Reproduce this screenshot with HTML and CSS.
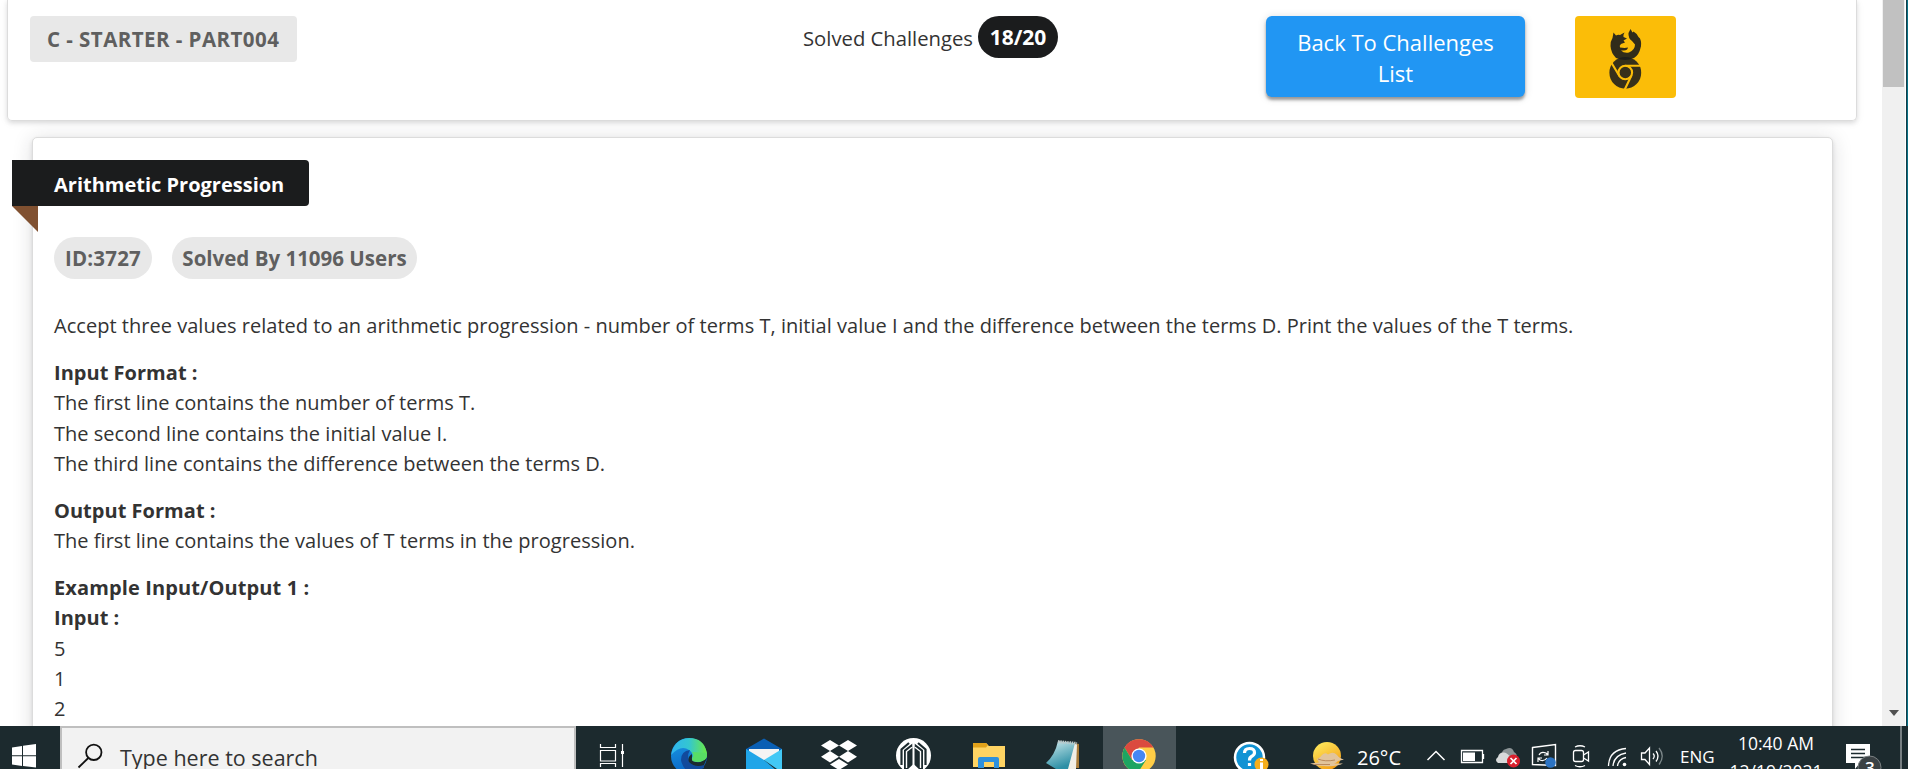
FILE: index.html
```html
<!DOCTYPE html>
<html lang="en">
<head>
<meta charset="utf-8">
<title>Arithmetic Progression</title>
<link rel="stylesheet" href="styles.css">
</head>
<body>
<div class="browser">
  <main class="page">
    <header class="topbar">
      <div class="part-label"><span class="t-part">C - STARTER - PART004</span></div>
      <div class="solved"><span class="t-solved">Solved Challenges</span><span class="count"><span class="t-count">18/20</span></span></div>
      <button class="back"><span class="t-back1">Back To Challenges</span><span class="t-back2">List</span></button>
      <div class="browsers">
        <svg width="101" height="82" viewBox="1575 16 101 82">
          <path fill="#1b1c1d" fill-opacity=".9" d="M1613.500 32.500L1616 35.500Q1618 34.500 1620 35L1624.500 32.500Q1623 35 1623.500 37L1627 38.500L1623.500 40.500L1625 42.500L1621 44Q1619 45.500 1620 47.500L1624.500 48L1628 47.500Q1627.500 50.500 1624 50.500L1621 50.500Q1624 53.500 1629 52.500Q1635 50 1635 44.500L1632 41Q1628 38 1628.500 33L1630.500 29L1632.500 32.500L1633.500 31.500Q1637 33.500 1638.500 37L1640 38.500Q1642 43 1640.500 48Q1639 55 1634 58Q1625 62 1616 58Q1611 53 1610.500 46Q1610 42 1612.500 38Z"/>
          <circle cx="1625.300" cy="72.800" r="15.900" fill="#1b1c1d" fill-opacity=".88"/>
          <g fill="none" stroke="#fbbd08" stroke-width="2.100"><circle cx="1625.300" cy="72.500" r="6.800"/><path d="M1625.300 65.700H1641M1619.400 76L1611.300 62.500M1631.200 76L1624.500 90"/></g>
        </svg>
      </div>
    </header>
    <section class="challenge">
      <div class="ribbon"><span class="t-ribbon">Arithmetic Progression</span></div>
      <div class="tags"><span class="tag tag-id"><span class="t-id">ID:3727</span></span><span class="tag tag-users"><span class="t-users">Solved By 11096 Users</span></span></div>
      <div class="description">
        <p>Accept three values related to an arithmetic progression - number of terms T, initial value I and the difference between the terms D. Print the values of the T terms.</p>
        <p><b>Input Format :</b><br>The first line contains the number of terms T.<br>The second line contains the initial value I.<br>The third line contains the difference between the terms D.</p>
        <p><b>Output Format :</b><br>The first line contains the values of T terms in the progression.</p>
        <p><b class="example">Example Input/Output 1 :</b><br><b>Input :</b><br>5<br>1<br>2</p>
      </div>
    </section>
  </main>
  <div class="scrollbar"><div class="thumb"></div><div class="down"></div></div>
  <div class="desktop-edge"></div>
</div>
<footer class="taskbar">
  <svg class="start" width="60" height="43" viewBox="0 726 60 43" fill="#fff"><path d="M12 747.500L22 746V755.200H12ZM23 745.800L36 744V755.200H23ZM12 756.200H22V766L12 764.500ZM23 756.200H36V767.500L23 766Z"/></svg>
  <div class="search">
    <svg width="50" height="41" viewBox="62 728 50 41" fill="none" stroke="#111" stroke-width="1.800"><circle cx="93.800" cy="752.300" r="7.700"/><path d="M88.300 758L78.500 767.500"/></svg>
    <span class="t-search">Type here to search</span>
  </div>
  <svg width="76" height="43" viewBox="576 726 76 43" fill="none" stroke="#fff" stroke-width="1.200"><path d="M600.500 744V747.500H615.500V744M600.500 750.500H615.500V761H600.500ZM600.500 767V763.500H615.500V767M622.500 744V767"/><path d="M621 751h3v3h-3z" fill="#fff" stroke="none"/></svg>
  <svg width="75" height="43" viewBox="652 726 75 43">
    <defs><linearGradient id="e1"><stop offset="0" stop-color="#2fb4f0"/><stop offset=".5" stop-color="#34c6d0"/><stop offset="1" stop-color="#6bea42"/></linearGradient><linearGradient id="e2" x1="0" y1="0" x2=".3" y2="1"><stop offset="0" stop-color="#1a9ae5"/><stop offset="1" stop-color="#0a66c5"/></linearGradient></defs>
    <circle cx="689" cy="756" r="18" fill="url(#e2)"/>
    <path d="M671 755Q674 739 689 738Q704 738 707 753Q708 762 698 762Q691 762 692 758Q694 753 689 750Q681 744 671 755Z" fill="url(#e1)"/>
    <path d="M690 750Q681 751 681 760Q682 767 690 774L704 768V764Q690 768 688 758Q688 753 690 750Z" fill="#114a9c"/>
    <path d="M692 754Q687 757 689 762Q695 768 704 765L707 758Q702 763 696 762Q691 761 692 758Z" fill="#1c2a2e"/>
    <path d="M692 752Q695 755 692 759Q691 762 699 762Q707 760 707 753Z" fill="#58dd65"/>
  </svg>
  <svg width="75" height="43" viewBox="727 726 75 43"><path d="M746 749L764 738.500L782 749V756H746Z" fill="#0a5fb4"/><path d="M749 749H779V760H749Z" fill="#f4f4f4"/><path d="M746 749L764 760L782 775H746Z" fill="#20a5e8"/><path d="M782 749L764 760L777 769H782Z" fill="#42c8f5"/></svg>
  <svg width="74" height="43" viewBox="802 726 74 43" fill="#fff"><path d="M830 740L839 745.500L830 751L821 745.500ZM848 740L857 745.500L848 751L839 745.500ZM830 751L839 756.800L830 762.500L821 756.800ZM848 751L857 756.800L848 762.500L839 756.800ZM839 759L848 764.500L839 770L830 764.500Z"/></svg>
  <svg width="75" height="43" viewBox="876 726 75 43"><circle cx="913.500" cy="755.500" r="17.500" fill="#fff"/><path d="M904 769V750L912.500 743.500V769ZM914.500 743.500L923 750V769H914.500Z" fill="#1c2a2e"/><path d="M901.500 765V749.500L909 743M925.500 765V749.500L918 743" fill="none" stroke="#1c2a2e" stroke-width="2.200"/><path d="M906.500 768V751.500L912 747.300M920.500 768V751.500L915 747.300" fill="none" stroke="#fff" stroke-width="1.400"/><path d="M907 770L913.500 764L920 770Z" fill="#fff"/><path d="M912.500 741H914.500V748H912.500Z" fill="#fff"/></svg>
  <svg width="75" height="43" viewBox="951 726 75 43"><path d="M973 743H986L989 746H1005V767H973Z" fill="#ffd463"/><path d="M973 743H986L988 745L986 747.500H973Z" fill="#e2a21a"/><path d="M978 768V759Q978 757 980 757H997Q999 757 999 759V768H994V762H984V768Z" fill="#2f91dc"/></svg>
  <svg width="77" height="43" viewBox="1026 726 77 43"><defs><linearGradient id="np" x2=".4" y2="1"><stop offset="0" stop-color="#d7edf0"/><stop offset=".5" stop-color="#7dbdc9"/><stop offset="1" stop-color="#2d8fa5"/></linearGradient></defs><path d="M1074 743L1079 744V768H1066Z" fill="#a87b38"/><path d="M1072 743L1077 744.500L1076 769H1066Z" fill="#f1eee6"/><path d="M1058 741L1075 743L1068 769H1056L1046 763Q1055 755 1058 741Z" fill="url(#np)"/><path d="M1058 741.500L1077 743.500" stroke="#bcc8c9" stroke-width="3" stroke-dasharray="1.500 .8"/></svg>
  <svg class="active" width="73" height="43" viewBox="1103 726 73 43"><circle cx="1139" cy="756" r="16.700" fill="#ffcd46"/><path d="M1124.500 747.600A16.700 16.700 0 0 1 1153.500 747.600H1139L1132 760Z" fill="#db4a3f"/><path d="M1124.500 747.600A16.700 16.700 0 0 0 1138 772.500L1146 760L1132 760Z" fill="#1da462"/><circle cx="1139" cy="756" r="7.600" fill="#fff"/><circle cx="1139" cy="756" r="6.200" fill="#4587f3"/></svg>
  <svg width="124" height="43" viewBox="1176 726 124 43"><circle cx="1249.500" cy="757.500" r="14.500" fill="#1193d4" stroke="#fff" stroke-width="2.500"/><path d="M1244.500 753Q1244.500 748.500 1249.500 748.500Q1254.500 748.500 1254.500 752.500Q1254.500 755 1251.500 756.500Q1249.500 757.500 1249.500 760.500M1249.500 763V766" fill="none" stroke="#fff" stroke-width="3.200"/><circle cx="1261.500" cy="764.500" r="7" fill="#f5ae1c"/><path d="M1260 759h3v2h-3zM1260 762.500h3v7h-3z" fill="#fff"/></svg>
  <svg width="52" height="43" viewBox="1300 726 52 43"><defs><linearGradient id="sun" x1=".2" y1="0" x2=".8" y2="1"><stop offset="0" stop-color="#ffe95c"/><stop offset="1" stop-color="#f29a13"/></linearGradient></defs><circle cx="1327" cy="756" r="14" fill="url(#sun)"/><path d="M1317 759Q1321 757 1322 755Q1325 752 1328 754.500Q1333 751 1337 755Q1339 758 1344 759.500L1338 761Q1336 763 1334 763.500H1343Q1336 767 1324 766Q1317 766 1310 763.500L1319 762.500Z" fill="#e2c49b"/><path d="M1318 759Q1325 762 1335 760M1314 764.500H1330" stroke="#b9895b" fill="none"/></svg>
  <span class="temp"><span class="t-temp">26°C</span></span>
  <svg width="34" height="43" viewBox="1418 726 34 43" fill="none" stroke="#fff" stroke-width="1.500"><path d="M1427.500 760L1436 751.500L1444.500 760"/></svg>
  <svg width="38" height="43" viewBox="1452 726 38 43"><path d="M1461.500 750.500H1482.500V762.500H1461.500ZM1483.500 754V759" fill="none" stroke="#fff" stroke-width="1.300"/><path d="M1463 752.500h12v8.500h-12z" fill="#fff"/></svg>
  <svg width="35" height="43" viewBox="1490 726 35 43"><path d="M1502 756Q1501 750 1506 749Q1512 746 1514 752Q1518 754 1516 758H1504Z" fill="#8c9496"/><path d="M1498 763Q1494 760 1498 757Q1499 752 1504 752.500Q1508 753 1511 758L1510 763Z" fill="#d7d9da"/><circle cx="1513.500" cy="761" r="6.500" fill="#d9202e"/><path d="M1510.500 758L1516.500 764M1516.500 758L1510.500 764" stroke="#fff" stroke-width="1.700"/></svg>
  <svg width="40" height="43" viewBox="1525 726 40 43"><path d="M1532.500 747.500L1555.500 744.500V765.500L1532.500 764.500Z" fill="none" stroke="#fff" stroke-width="1.400"/><path d="M1539 755Q1541 751 1546 753L1548 755M1548 751V755H1544M1547 758Q1544 762 1540 760L1538 758M1538 762V758H1542" fill="none" stroke="#fff" stroke-width="1.200"/><circle cx="1550.500" cy="762.500" r="5.300" fill="#2c74c4"/></svg>
  <svg width="33" height="43" viewBox="1565 726 33 43" fill="none" stroke="#fff" stroke-width="1.300"><rect x="1573.500" y="750.500" width="10" height="11" rx="2"/><path d="M1583.500 755L1588.500 752V761L1583.500 758M1575 747Q1580 744.500 1585 747M1575 765.500Q1580 768 1585 765.500"/></svg>
  <svg width="36" height="43" viewBox="1598 726 36 43" fill="none" stroke="#fff" stroke-width="1.300"><path d="M1608.500 766Q1609 750 1626 748.500M1613 766Q1614 755 1626 753M1617.500 766Q1618.500 759 1626 757.500"/><circle cx="1624.500" cy="764.500" r="1.800" fill="#fff" stroke="none"/></svg>
  <svg width="38" height="43" viewBox="1634 726 38 43" fill="none" stroke="#fff" stroke-width="1.300"><path d="M1641.500 753H1645L1649.500 748V764.500L1645 759.500H1641.500ZM1653 753.500Q1655.500 756 1653 759"/><path d="M1656 751Q1660 756 1656 761.500"/><path d="M1659 748Q1665.500 756 1659 764.500" stroke="#7c8789"/></svg>
  <span class="lang"><span class="t-lang">ENG</span></span>
  <div class="clock"><span class="t-time">10:40 AM</span><span class="t-date">12/19/2021</span></div>
  <div class="notify">
    <svg width="72" height="43" viewBox="1828 726 72 43"><path d="M1846 744H1870V763H1860L1855 769L1855 763H1846Z" fill="#fff"/><path d="M1851 749.500H1865M1851 753.500H1865M1851 757.500H1865" stroke="#1c2a2e" stroke-width="1.300"/><circle cx="1869.500" cy="767.500" r="11.500" fill="#3a4144" stroke="#7b8183" stroke-width="1"/></svg>
    <span class="badge">3</span>
  </div>
  <div class="peek"></div>
</footer>
</body>
</html>
```
FILE: styles.css
```css
* { box-sizing: border-box; }
html, body { margin: 0; width: 1908px; height: 769px; overflow: hidden; }
body { font-family: "Open Sans", "Noto Sans", sans-serif; font-size: 20px; color: #333; display: flex; flex-direction: column; background: #fff; }
span { white-space: nowrap; }
svg { display: block; flex: none; }
.browser { height: 726px; display: flex; overflow: hidden; }
.page { width: 1882px; padding-left: 7px; overflow: hidden; }
.topbar { width: 1850px; height: 121px; padding: 16px 0 0 22px; border: 1px solid #dcdcdc; border-top: 0; border-radius: 0 0 5px 5px; box-shadow: 0 2px 4px rgba(34,36,38,.12), 0 2px 10px rgba(34,36,38,.06); display: flex; align-items: flex-start; }
.part-label { width: 267px; height: 46px; border-radius: 4px; background: #e8e8e8; color: #5f5f5f; font-weight: 700; font-size: 20.500px; letter-spacing: .450px; display: flex; align-items: center; padding-left: 17px; }
.solved { margin-left: 506px; width: 255px; display: flex; align-items: center; }
.t-solved { width: 175px; padding-top: 2px; font-size: 20.250px; }
.count { width: 80px; height: 42px; border-radius: 21px; background: #1b1c1d; color: #fff; font-weight: 700; font-size: 21px; display: flex; align-items: center; justify-content: center; }
.back { margin: 0 0 0 208px; padding: 2px 0 0; width: 259px; height: 81px; border: 0; border-radius: 6px; background: #2196f3; color: #fff; font: inherit; line-height: 31px; font-size: 22px; display: flex; flex-direction: column; align-items: center; justify-content: center; box-shadow: 0 3px 3px rgba(0,0,0,.35), 0 1px 8px rgba(0,0,0,.15); }
.browsers { margin-left: 50px; width: 101px; height: 82px; border-radius: 4px; background: #fbbd08; }
.challenge { margin: 16px 0 0 25px; width: 1801px; height: 700px; border: 1px solid #dcdcdc; border-radius: 5px; padding: 22px 0 0 21px; box-shadow: 0 2px 4px rgba(34,36,38,.12), 0 2px 20px rgba(34,36,38,.15); background: #fff; }
.ribbon { position: relative; margin-left: -42px; width: 297px; height: 46px; padding: 2px 0 0 42px; background: #1b1c1d; color: #fff; font-weight: 700; border-radius: 0 4px 4px 0; display: flex; align-items: center; }
.ribbon::after { content: ""; position: absolute; left: 0; top: 46px; border-style: solid; border-width: 0 26px 26px 0; border-color: transparent #805030 transparent transparent; }
.tags { display: flex; gap: 20px; margin-top: 31px; }
.tag { height: 42px; border-radius: 21px; background: #e8e8e8; color: #5f5f5f; font-weight: 700; font-size: 20.500px; display: flex; align-items: center; justify-content: center; }
.tag-id { width: 98px; letter-spacing: .200px; }
.tag-users { width: 245px; }
.description { margin-top: 32px; line-height: 30.330px; letter-spacing: .026px; }
.example { letter-spacing: .120px; }
.description p { margin: 0 0 16.600px; white-space: nowrap; }
.scrollbar { width: 24px; background: #f0f0f0; display: flex; flex-direction: column; align-items: center; justify-content: space-between; border-right: 1px solid #fff; }
.thumb { width: 21px; height: 87px; background: #c1c1c1; }
.down { border: 5.500px solid transparent; border-top: 6px solid #505050; border-bottom: 0; margin-bottom: 10px; }
.desktop-edge { width: 2px; background: #087184; border-left: 1px solid #143d49; }
.taskbar { height: 43px; background: #1c2a2e; color: #fff; display: flex; overflow: hidden; }
.search { width: 516px; height: 43px; background: #f2f2f2; border: 2px solid #bfbfbf; border-bottom: 0; display: flex; color: #333; font-size: 21.500px; }
.t-search { margin: 16px 0 0 8px; line-height: 28px; }
.active { background: #49555a; }
.temp { width: 66px; padding: 19px 0 0 5px; font-size: 20px; line-height: 26px; }
.lang { width: 52px; padding: 19px 0 0 8px; font-size: 17px; line-height: 24px; }
.clock { width: 104px; display: flex; flex-direction: column; align-items: center; padding-top: 5px; font-size: 17.500px; line-height: 24px; gap: 4px; }
.notify { position: relative; width: 72px; }
.badge { position: absolute; left: 37px; top: 30px; font-size: 17px; line-height: 24px; font-weight: 600; }
.peek { width: 2px; background: #777f82; }
```
